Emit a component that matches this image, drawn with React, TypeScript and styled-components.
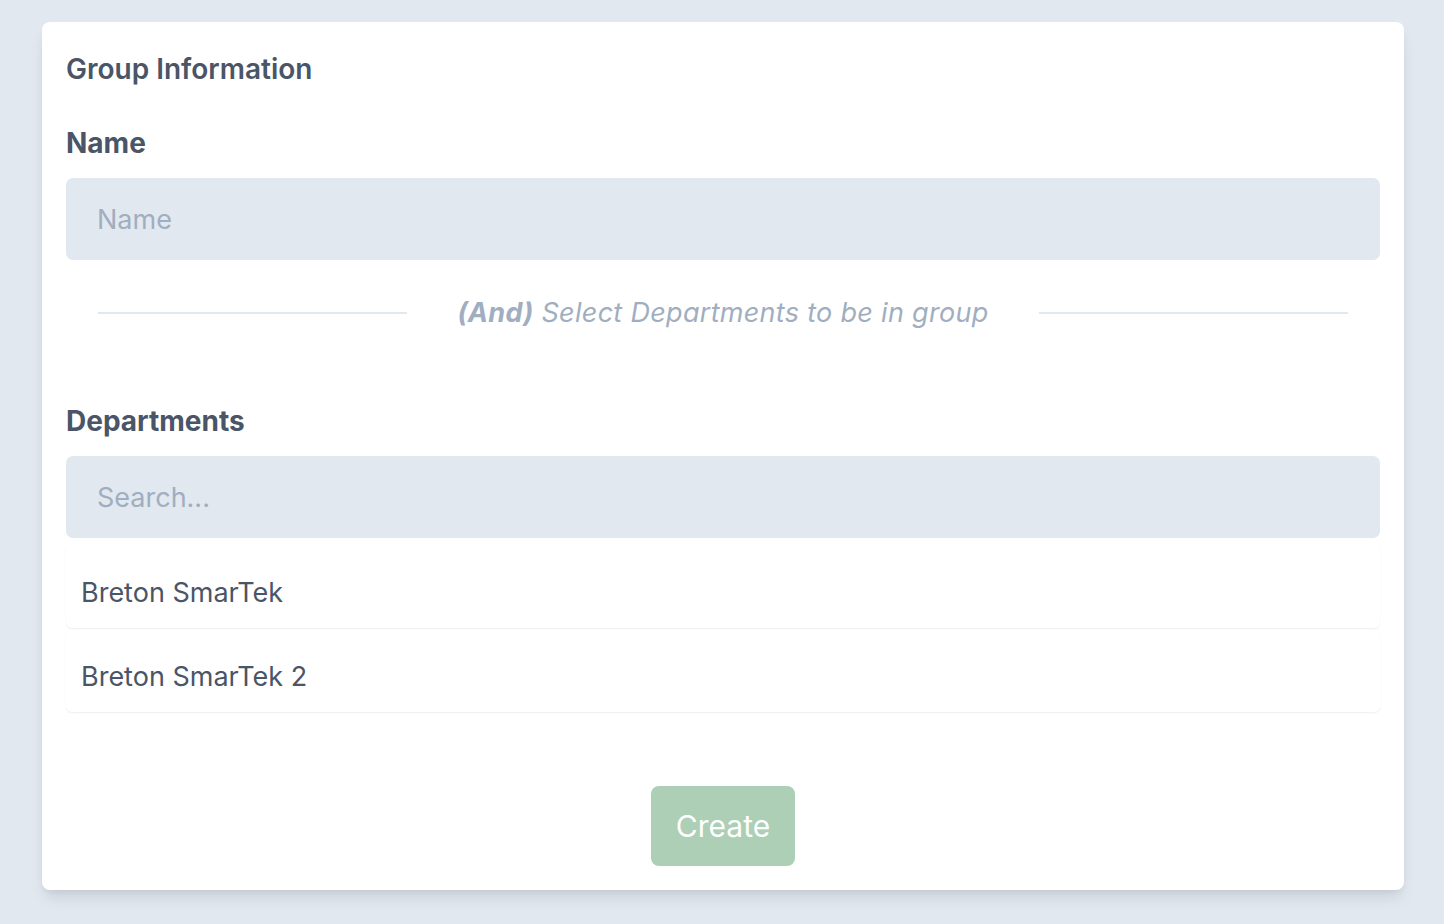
import React from "react";
import styled, { createGlobalStyle } from "styled-components";

const GlobalStyle = createGlobalStyle`
  body {
    margin: 0;
    background: #e2e8f0;
    font-family: Inter, "Noto Sans", "Liberation Sans", sans-serif;
    color: #4a5568;
  }
`;

const Page = styled.div`
  padding: 22px 40px 34px 42px;
`;

const Card = styled.div`
  background: #ffffff;
  border-radius: 8px;
  box-shadow: 0 10px 15px -3px rgba(0, 0, 0, 0.1),
    0 4px 6px -2px rgba(0, 0, 0, 0.05);
  padding: 31px 24px 24px 24px;
  display: flex;
  flex-direction: column;
`;

const Title = styled.h2`
  margin: 0;
  font-size: 28px;
  line-height: 32px;
  font-weight: 600;
  color: #4a5568;
`;

const Label = styled.label<{ $top: number }>`
  display: block;
  margin-top: ${(p) => p.$top}px;
  margin-bottom: 19px;
  font-size: 28px;
  line-height: 32px;
  font-weight: 700;
  color: #4a5568;
`;

const Input = styled.input`
  box-sizing: border-box;
  width: 100%;
  height: 82px;
  border: none;
  outline: none;
  border-radius: 7px;
  background: #e2e8f0;
  padding: 0 31px;
  font-family: inherit;
  font-size: 27px;
  color: #4a5568;

  &::placeholder {
    color: #a0aec0;
  }
`;

const Divider = styled.div`
  display: flex;
  align-items: center;
  margin-top: 36px;
  padding: 0 32px;
  height: 34px;
`;

const Rule = styled.div`
  flex: 1;
  height: 2px;
  background: #e2e8f0;
`;

const DividerText = styled.span`
  margin: 0 50px;
  font-size: 27px;
  letter-spacing: 0.3px;
  line-height: 34px;
  font-style: italic;
  color: #a0aec0;
  white-space: nowrap;

  b {
    font-weight: 700;
  }
`;

const List = styled.ul`
  list-style: none;
  margin: 6px 0 0 0;
  padding: 0;
`;

const Item = styled.li`
  padding: 31px 15px 17px;
  font-size: 27px;
  line-height: 36px;
  color: #4a5568;
  border-radius: 6px;
  box-shadow: 0 1px 2px 0 rgba(0, 0, 0, 0.07);
`;

const Actions = styled.div`
  display: flex;
  justify-content: center;
  margin-top: 74px;
`;

const Button = styled.button`
  height: 80px;
  padding: 0 25px;
  border: none;
  border-radius: 8px;
  background: #accfb6;
  color: #ffffff;
  font-family: inherit;
  font-size: 30px;
  cursor: pointer;
`;

const departments = ["Breton SmarTek", "Breton SmarTek 2"];

export default function App() {
  return (
    <>
      <GlobalStyle />
      <Page>
        <Card>
          <Title>Group Information</Title>
          <Label $top={42}>Name</Label>
          <Input placeholder="Name" />
          <Divider>
            <Rule />
            <DividerText>
              <b>(And)</b> Select Departments to be in group
            </DividerText>
            <Rule />
          </Divider>
          <Label $top={75}>Departments</Label>
          <Input placeholder="Search..." />
          <List>
            {departments.map((d) => (
              <Item key={d}>{d}</Item>
            ))}
          </List>
          <Actions>
            <Button>Create</Button>
          </Actions>
        </Card>
      </Page>
    </>
  );
}
